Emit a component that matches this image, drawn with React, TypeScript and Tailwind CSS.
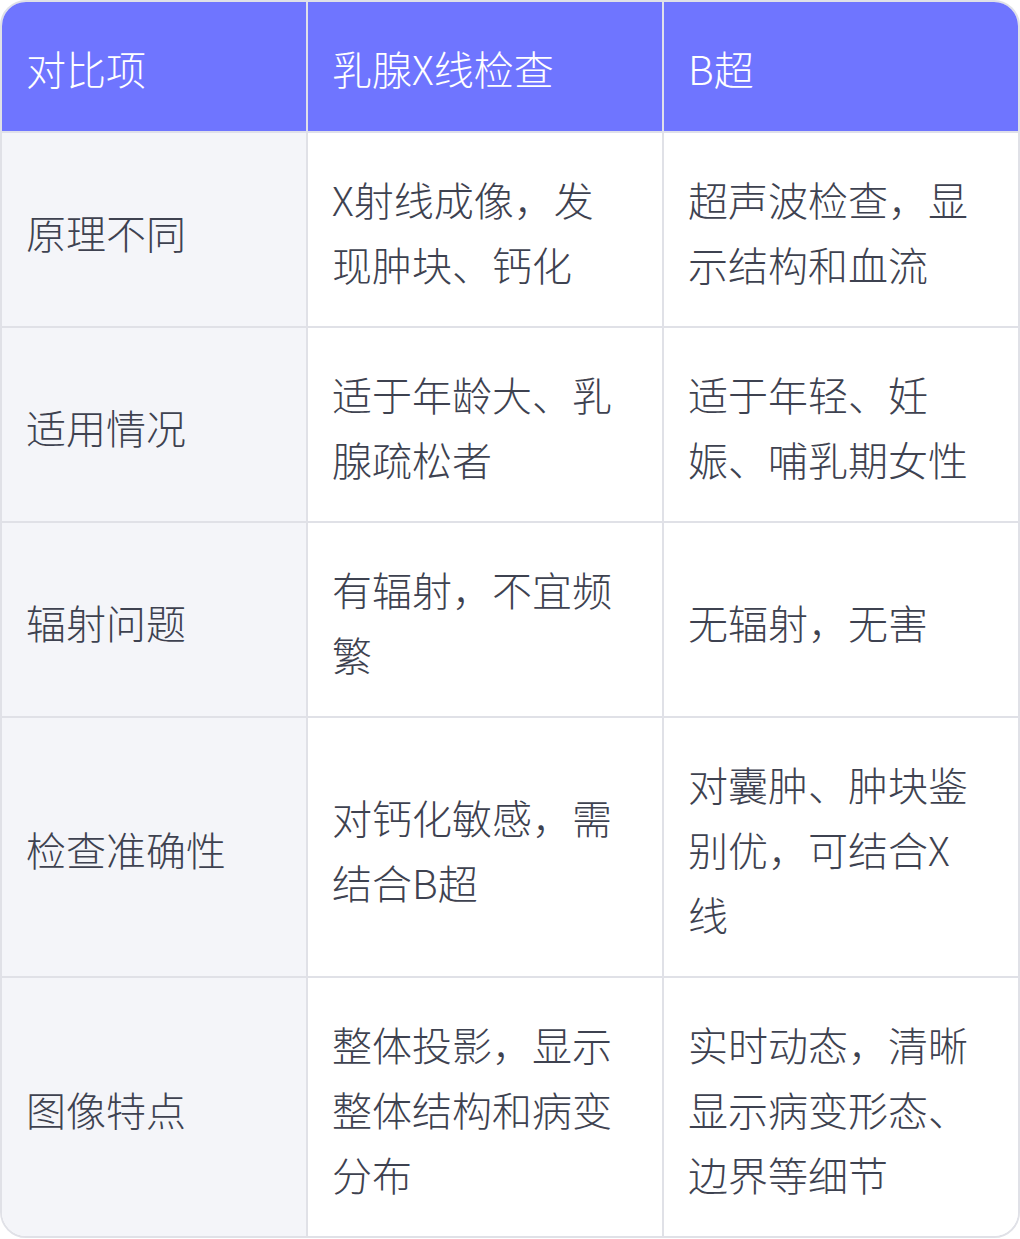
import React from "react";

const rows: [string, string, string][] = [
  ["原理不同", "X射线成像，发现肿块、钙化", "超声波检查，显示结构和血流"],
  ["适用情况", "适于年龄大、乳腺疏松者", "适于年轻、妊娠、哺乳期女性"],
  ["辐射问题", "有辐射，不宜频繁", "无辐射，无害"],
  ["检查准确性", "对钙化敏感，需结合B超", "对囊肿、肿块鉴别优，可结合X线"],
  ["图像特点", "整体投影，显示整体结构和病变分布", "实时动态，清晰显示病变形态、边界等细节"],
];

export default function App() {
  return (
    <div
      className="w-[1020px] h-[1239px] bg-white"
      style={{ fontFamily: '"Noto Sans CJK SC", "Noto Sans", sans-serif' }}
    >
      <div className="w-[1020px] rounded-[26px] border-2 border-[#e0e1e7] overflow-hidden">
        <div className="grid grid-cols-[306px_356px_354px] text-[40px] leading-[65px] font-light">
          {["对比项", "乳腺X线检查", "B超"].map((h, i) => (
            <div
              key={h}
              className={`bg-[#6f75ff] text-white pl-6 pr-10 pt-[34px] pb-[30px] border-b-2 border-[#dfe0ea] ${i < 2 ? "border-r-2" : ""}`}
            >
              {h}
            </div>
          ))}
          {rows.map((r, ri) =>
            r.map((c, ci) => (
              <div
                key={ri + "-" + ci}
                className={`flex items-center pl-6 pr-10 pt-[34px] pb-[29px] text-[#3e4250] border-[#e0e1e7] ${
                  ri < rows.length - 1 ? "border-b-2" : ""
                } ${ci < 2 ? "border-r-2" : ""} ${ci === 0 ? "bg-[#f4f5f9]" : "bg-white"}`}
              >
                <span>{c}</span>
              </div>
            ))
          )}
        </div>
      </div>
    </div>
  );
}
